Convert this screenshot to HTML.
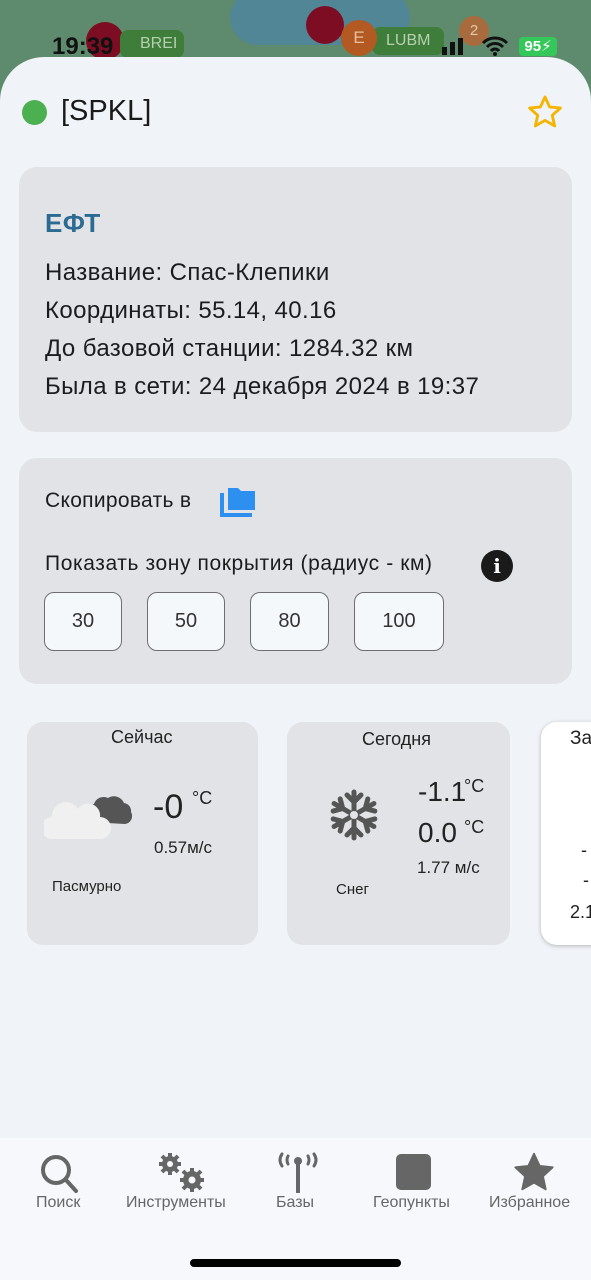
<!DOCTYPE html>
<html><head><meta charset="utf-8"><style>
*{margin:0;padding:0;box-sizing:border-box}
body{width:591px;height:1280px;overflow:hidden;font-family:"Liberation Sans","DejaVu Sans",sans-serif;background:#5e8b6d;position:relative;color:#1c1c1e}
.abs{position:absolute}
.sheet{position:absolute;left:0;top:57px;width:591px;height:1223px;background:#f0f3f7;border-radius:44px 44px 0 0;overflow:hidden}
.card{position:absolute;left:19px;width:553px;background:#e1e3e7;border-radius:18px}
.t{position:absolute;font-size:24px;white-space:nowrap;letter-spacing:0.4px}
.btn{position:absolute;top:592px;height:59px;border:1.5px solid #6e6e72;border-radius:10px;background:#f5f8fb;font-size:20px;display:flex;align-items:center;justify-content:center;color:#333}
.w{position:absolute;top:722px;background:#e1e3e7;border-radius:16px;height:223px}
.s{position:absolute;font-size:17px;white-space:nowrap;color:#222}
.nav{position:absolute;left:0;top:1138px;width:591px;height:142px;background:#f6f8fc}
.lab{position:absolute;top:1194px;font-size:16px;color:#666;white-space:nowrap}
</style></head><body>
<div class="abs" style="left:230px;top:-10px;width:180px;height:55px;background:#4d84a0;border-radius:30px;opacity:.8"></div>
<div class="abs" style="left:86px;top:22px;width:38px;height:38px;border-radius:50%;background:#7d0d22"></div>
<div class="abs" style="left:120px;top:30px;width:64px;height:28px;border-radius:8px;background:#3f7d3a;color:#b7d0b0;font-size:16px;padding:5px 0 0 20px">BREI</div>
<div class="abs" style="left:306px;top:6px;width:38px;height:38px;border-radius:50%;background:#7d0d22"></div>
<div class="abs" style="left:372px;top:27px;width:72px;height:28px;border-radius:8px;background:#3f7d3a;color:#b7d0b0;font-size:16px;padding:5px 0 0 14px">LUBM</div>
<div class="abs" style="left:341px;top:20px;width:36px;height:36px;border-radius:50%;background:#b35a23;color:#e8c0a0;font-size:17px;text-align:center;line-height:36px">E</div>
<div class="abs" style="left:459px;top:16px;width:30px;height:30px;border-radius:50%;background:#a86b3e;color:#e5c8aa;font-size:15px;text-align:center;line-height:30px">2</div>
<div class="abs" style="left:52px;top:33px;font-size:24px;font-weight:bold;color:#111">19:39</div>
<div class="abs" style="left:442px;top:47px;width:5px;height:8px;background:#111"></div>
<div class="abs" style="left:450px;top:42px;width:5px;height:13px;background:#111"></div>
<div class="abs" style="left:458px;top:38px;width:5px;height:17px;background:#111"></div>
<svg class="abs" style="left:481px;top:36px" width="28" height="20" viewBox="0 0 28 20"><path d="M2 7a17 17 0 0 1 24 0M6 11a11 11 0 0 1 16 0M10 15a5 5 0 0 1 8 0" fill="none" stroke="#111" stroke-width="3"/><circle cx="14" cy="18" r="2" fill="#111"/></svg>
<div class="abs" style="left:519px;top:37px;width:38px;height:19px;background:#34c759;border-radius:4px;color:#fff;font-size:15px;font-weight:bold;text-align:center;line-height:19px">95⚡</div>

<div class="sheet"></div>
<div class="abs" style="left:22px;top:100px;width:25px;height:25px;border-radius:50%;background:#4caf50"></div>
<div class="t" style="left:61px;top:95px;font-size:29px;color:#1a1a1a;letter-spacing:0">[SPKL]</div>
<svg class="abs" style="left:525px;top:93px" width="40" height="38" viewBox="0 0 24 24"><path d="M12 2.5l2.9 6.3 6.8.7-5.1 4.6 1.5 6.7L12 17.3l-6.1 3.5 1.5-6.7-5.1-4.6 6.8-.7z" fill="none" stroke="#f5b400" stroke-width="1.8" stroke-linejoin="round"/></svg>

<div class="card" style="top:167px;height:265px"></div>
<div class="t" style="left:45px;top:208px;font-size:26px;font-weight:bold;color:#2b6a91">ЕФТ</div>
<div class="t" style="left:45px;top:259px">Название: Спас-Клепики</div>
<div class="t" style="left:45px;top:297px">Координаты: 55.14, 40.16</div>
<div class="t" style="left:45px;top:335px">До базовой станции: 1284.32 км</div>
<div class="t" style="left:45px;top:373px">Была в сети: 24 декабря 2024 в 19:37</div>

<div class="card" style="top:458px;height:226px"></div>
<div class="t" style="left:45px;top:489px;font-size:21px;letter-spacing:0.3px">Скопировать в</div>
<svg class="abs" style="left:220px;top:485px" width="38" height="34" viewBox="0 0 38 34"><path d="M2 8v22h30" fill="none" stroke="#2d8ff0" stroke-width="4"/><path d="M8 3h10l3 3h14v19H8z" fill="#2d8ff0"/></svg>
<div class="t" style="left:45px;top:552px;font-size:21px;letter-spacing:0.6px">Показать зону покрытия (радиус - км)</div>
<div class="abs" style="left:481px;top:550px;width:32px;height:32px;border-radius:50%;background:#1a1a1a;color:#fff;font-weight:bold;font-size:20px;text-align:center;line-height:32px;font-family:'DejaVu Serif',serif">i</div>
<div class="btn" style="left:44px;width:78px">30</div>
<div class="btn" style="left:147px;width:78px">50</div>
<div class="btn" style="left:250px;width:79px">80</div>
<div class="btn" style="left:354px;width:90px">100</div>

<div class="w" style="left:27px;width:231px"></div>
<div class="s" style="left:111px;top:727px;font-size:18px">Сейчас</div>
<svg class="abs" style="left:44px;top:782px" width="92" height="60" viewBox="0 0 92 60"><path d="M46 40a10 10 0 0 1 4-18 10 10 0 0 1 14-6 11 11 0 0 1 16 5 8 8 0 0 1 7 9 8 8 0 0 1-6 12z" fill="#555"/><path d="M8 57a11 11 0 0 1 0-22 14 14 0 0 1 26-8 12 12 0 0 1 22 8 11 11 0 0 1 0 22z" fill="#f0f0f0"/></svg>
<div class="s" style="left:153px;top:788px;font-size:34px">-0</div>
<div class="s" style="left:192px;top:788px;font-size:18px">°C</div>
<div class="s" style="left:154px;top:838px">0.57м/с</div>
<div class="s" style="left:52px;top:878px;font-size:15px">Пасмурно</div>

<div class="w" style="left:287px;width:223px"></div>
<div class="s" style="left:362px;top:729px;font-size:18px">Сегодня</div>
<svg class="abs" style="left:328px;top:789px" width="52" height="52" viewBox="-26 -26 52 52"><g stroke="#555" stroke-width="5" stroke-linecap="round" fill="none"><g id="a"><path d="M0-23V23M-7-20L0-13 7-20M-7 20L0 13 7 20"/></g><use href="#a" transform="rotate(60)"/><use href="#a" transform="rotate(120)"/></g><circle r="4" fill="#e1e3e7"/></svg>
<div class="s" style="left:418px;top:776px;font-size:28px">-1.1</div>
<div class="s" style="left:464px;top:776px;font-size:18px">°C</div>
<div class="s" style="left:418px;top:817px;font-size:28px">0.0</div>
<div class="s" style="left:464px;top:817px;font-size:18px">°C</div>
<div class="s" style="left:417px;top:858px">1.77 м/с</div>
<div class="s" style="left:336px;top:881px;font-size:15px">Снег</div>

<div class="w" style="left:541px;width:80px;background:#fff;box-shadow:0 1px 4px rgba(0,0,0,.25)"></div>
<div class="s" style="left:570px;top:728px;font-size:19px">За</div>
<div class="s" style="left:581px;top:840px;font-size:18px">-</div>
<div class="s" style="left:583px;top:870px;font-size:18px">-</div>
<div class="s" style="left:570px;top:902px;font-size:18px">2.1</div>

<div class="nav"></div>
<svg class="abs" style="left:38px;top:1152px" width="44" height="42" viewBox="0 0 44 42"><circle cx="18" cy="18" r="13" fill="none" stroke="#666" stroke-width="4"/><path d="M28 28l10 11" stroke="#666" stroke-width="4" stroke-linecap="round"/></svg>
<div class="lab" style="left:36px">Поиск</div>
<svg class="abs" style="left:155px;top:1151px" width="54" height="42" viewBox="0 0 54 42"><g fill="#666"><circle cx="15" cy="13" r="8"/><circle cx="37" cy="29" r="9"/><g stroke="#666" stroke-width="4"><path d="M15 2v22M4 13h22M7 5l16 16M23 5L7 21"/><path d="M37 17v24M25 29h24M28 20l18 18M46 20L28 38"/></g></g><circle cx="15" cy="13" r="3" fill="#f6f8fc"/><circle cx="37" cy="29" r="3.5" fill="#f6f8fc"/></svg>
<div class="lab" style="left:126px">Инструменты</div>
<svg class="abs" style="left:275px;top:1151px" width="46" height="42" viewBox="0 0 46 42"><g fill="none" stroke="#666" stroke-width="3" stroke-linecap="round"><path d="M7 3q-4 6 0 12M13 5q-2 4 0 8M39 3q4 6 0 12M33 5q2 4 0 8"/><path d="M23 12v29" stroke-width="4"/></g><circle cx="23" cy="10" r="4" fill="#666"/></svg>
<div class="lab" style="left:276px">Базы</div>
<div class="abs" style="left:396px;top:1154px;width:35px;height:36px;border-radius:5px;background:#666"></div>
<div class="lab" style="left:373px">Геопункты</div>
<svg class="abs" style="left:511px;top:1151px" width="46" height="44" viewBox="0 0 24 24"><path d="M12 1.5l3.1 6.6 7.1.8-5.3 4.9 1.5 7.1L12 17.3l-6.4 3.6 1.5-7.1L1.8 8.9l7.1-.8z" fill="#666" stroke="#666" stroke-linejoin="round"/></svg>
<div class="lab" style="left:489px">Избранное</div>
<div class="abs" style="left:190px;top:1259px;width:211px;height:8px;border-radius:4px;background:#000"></div>
</body></html>
